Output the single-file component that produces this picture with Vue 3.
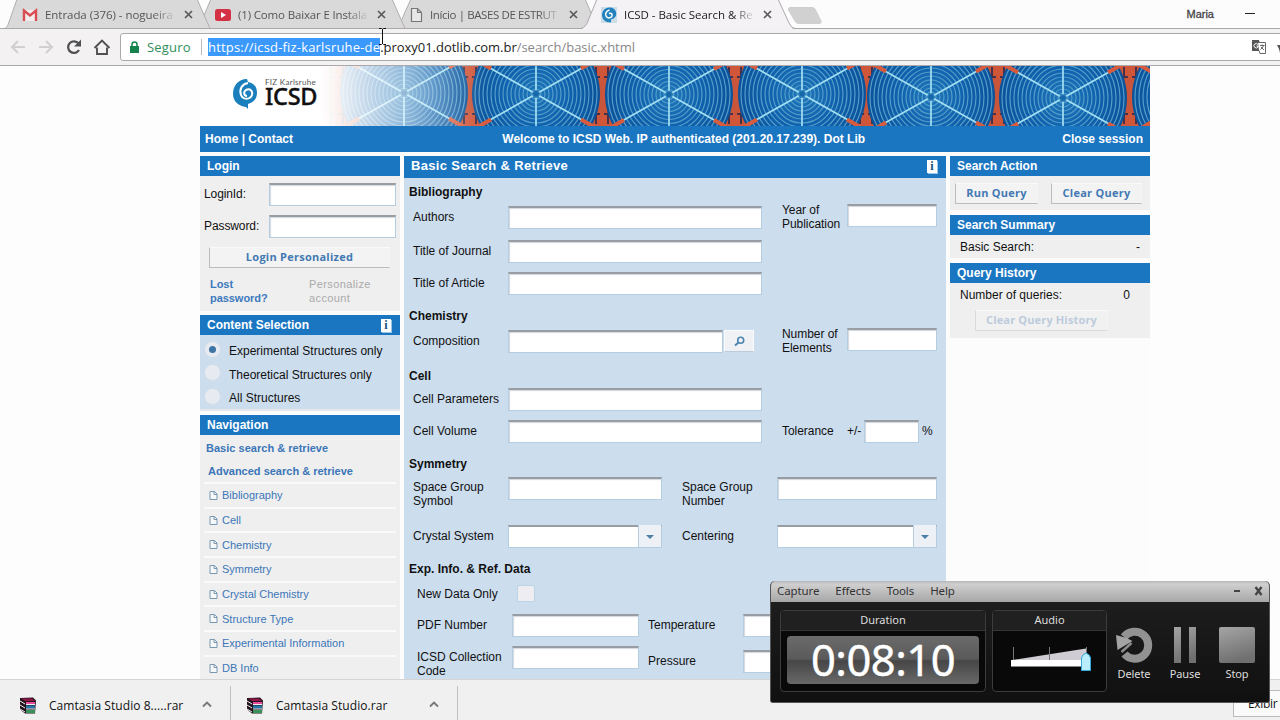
<script setup>
const tabs = [
  { icon: 'gmail', title: 'Entrada (376) - nogueira', cls: 't1' },
  { icon: 'youtube', title: '(1) Como Baixar E Instala', cls: 't2' },
  { icon: 'page', title: 'Início | BASES DE ESTRUT', cls: 't3' },
  { icon: 'icsd', title: 'ICSD - Basic Search & Re', cls: 't4' },
]
const fans = [
  { x: 204, y: 27 }, { x: 336, y: 28 }, { x: 469, y: 28.5 },
  { x: 602, y: 28 }, { x: 731, y: 31 }, { x: 863, y: 32 }, { x: 996, y: 31 },
]
const rings = [5, 9, 13, 17, 21, 25, 29, 33, 37, 41, 45, 49, 53, 57, 61]
const frames = [137, 270, 402, 535, 666, 798, 930]
const nav = ['Bibliography', 'Cell', 'Chemistry', 'Symmetry', 'Crystal Chemistry', 'Structure Type', 'Experimental Information', 'DB Info']
const structures = ['Experimental Structures only', 'Theoretical Structures only', 'All Structures']
const downloads = ['Camtasia Studio 8.....rar', 'Camtasia Studio.rar']
</script>

<template>
  <div class="window">
    <header class="tabstrip">
      <svg class="tabshapes" width="1280" height="29" viewBox="0 0 1280 29">
        <rect width="1280" height="29" fill="#fdfcfd" />
        <g fill="#dad9da" stroke="#b0aeb0">
          <path d="M398 28.5 L405 12 L411 -1 H585 L598 28.5Z" />
          <path d="M200 28.5 L205 13 L211 -1 H392 L405 28.5Z" />
          <path d="M5 28.5 Q8 27 9 22 L17 -1 H197 L210 28.5Z" />
        </g>
        <path d="M0 28.5H1280" stroke="#a9a8aa" />
        <path d="M581 28.5 Q586 27 588 21 L597 -1 H778 L789 23 Q791 28 795 28.5" fill="#f4f2f4" stroke="#a9a8aa" />
        <path d="M583 28.5H792" stroke="#f4f2f4" />
        <path d="M790 7.500H812Q814 7.500 815 9L821 21Q822 23.500 819 23.500H799Q796 23.500 795 21L788.500 10Q788 7.500 790 7.500Z" fill="#d2d1d2" stroke="#d0cfd0" />
      </svg>
      <div v-for="t in tabs" :key="t.cls" class="tab" :class="t.cls">
        <svg v-if="t.icon === 'gmail'" class="fav" width="16" height="16" viewBox="0 0 16 16">
          <path d="M1 3h14v11H1z" fill="#f3ecec" />
          <path d="M2 14V3.500L8 8.500L14 3.500V14" fill="none" stroke="#d94c50" stroke-width="2.400" />
        </svg>
        <svg v-else-if="t.icon === 'youtube'" class="fav" width="16" height="16" viewBox="0 0 16 16">
          <rect y="2" width="16" height="12" rx="2.500" fill="#d43145" /><path d="M6 5v6l5-3z" fill="#fff" />
        </svg>
        <svg v-else-if="t.icon === 'page'" class="fav" width="16" height="16" viewBox="0 0 16 16">
          <path d="M3.500 1.500h6l4 4v9h-10z M9.500 1.500v4h4" fill="#e8e8e8" stroke="#777" stroke-width="1.200" />
        </svg>
        <svg v-else class="fav" width="16" height="16" viewBox="0 0 16 16">
          <rect width="16" height="16" fill="#cbdde9" />
          <path d="M9 .5C4 0 1 4 1 8s3 7.500 9 7.500v-3c4-1 6-4 5-7.500C14 2 12 .5 9 .5z" fill="#2382bd" />
          <path d="M8.500 3C5 4 4 7 5 9c1 2.500 5 2.500 6 0 .5-2-1-3.500-3-2.500" fill="none" stroke="#fff" stroke-width="1.500" />
        </svg>
        <span class="title">{{ t.title }}</span>
        <svg class="close" width="9" height="9" viewBox="0 0 9 9"><path d="M1 1l7 7M8 1l-7 7" stroke="#5a5a5c" stroke-width="1.700" /></svg>
      </div>
      <span class="user">Maria</span>
      <i class="minimize"></i>
    </header>

    <div class="toolbar">
      <svg class="navicons" width="120" height="36" viewBox="0 0 120 36">
        <g fill="none" stroke="#d0cfd1" stroke-width="2">
          <path d="M25 18H12M18 12l-6 6 6 6" /><path d="M39 18h13M46 12l6 6-6 6" />
        </g>
        <g fill="none" stroke="#505052" stroke-width="2.200">
          <path d="M78.500 14.500A5.800 5.800 0 1 0 79 21" />
          <path d="M97 18.500v6.500h10v-6.500" stroke-width="1.900" /><path d="M94.500 19L102 11.500l7.500 7.500" stroke-width="1.900" />
        </g>
        <path d="M81 10.500v7h-7z" fill="#505052" />
      </svg>
      <div class="omnibox">
        <svg class="lock" width="9" height="12" viewBox="0 0 9 12"><rect y="5" width="9" height="7" fill="#15834b" /><path d="M2 6V3.500Q2 1 4.500 1T7 3.500V6" fill="none" stroke="#15834b" stroke-width="1.500" /></svg>
        <span class="secure">Seguro</span>
        <i class="sep"></i>
        <span class="url"><mark>https://icsd-fiz-karlsruhe-de</mark><b>.proxy01.dotlib.com.br</b><span>/search/basic.xhtml</span></span>
        <svg class="translate" width="30" height="16" viewBox="0 0 30 16">
          <path d="M1 1h7l3 11H1z" fill="#555" /><path d="M7 3.500h7.500v11H9l-1-3" fill="#fff" stroke="#666" />
          <path d="M7 5.500A2.200 2.200 0 1 0 7 8V7H5.500" fill="none" stroke="#fff" /><path d="M9 6.500h4.500M11.300 5.500v1M12.500 6.500Q12 9 9.500 10.500M10 8l3 3" fill="none" stroke="#666" />
          <path d="M26 6h5v5l-2 3-1-4z" fill="#555" />
        </svg>
      </div>
    </div>

    <main class="page">
      <div class="site">
        <div class="banner">
          <svg width="950" height="60" viewBox="0 0 950 60">
            <defs>
              <linearGradient id="fade"><stop offset="0" stop-color="#fff" /><stop offset=".08" stop-color="#fff" stop-opacity=".95" /><stop offset=".5" stop-color="#fff" stop-opacity=".55" /><stop offset="1" stop-color="#fff" stop-opacity="0" /></linearGradient>
              <radialGradient id="blade"><stop offset="0" stop-color="#1f78b9" /><stop offset=".5" stop-color="#0f62ae" /><stop offset="1" stop-color="#0b5299" /></radialGradient>
            </defs>
            <rect x="110" width="840" height="60" fill="#a5483e" />
            <g v-for="f in frames" :key="f">
              <path :d="`M${f - 5} 0h10v60h-10z`" fill="#c9553a" />
              <path :d="`M${f - 26} 0h52L${f + 7} 12H${f - 7}zM${f - 26} 60h52L${f + 7} 48H${f - 7}z`" fill="#d0563a" />
              <path :d="`M${f - 6} 1v10h4M${f + 6} 1v10h-4M${f - 6} 58v-10h4M${f + 6} 58v-10h-4`" fill="none" stroke="#46304a" stroke-width="2" />
            </g>
            <g v-for="f in fans" :key="f.x">
              <circle :cx="f.x" :cy="f.y" r="64" fill="url(#blade)" />
              <circle v-for="r in rings" :key="r" :cx="f.x" :cy="f.y" :r="r" fill="none" stroke="#559cca" stroke-width="1.200" />
              <path :d="`M${f.x} -2V64M${f.x - 55} ${f.y - 31}L${f.x + 55} ${f.y + 31}M${f.x - 55} ${f.y + 31}L${f.x + 55} ${f.y - 31}`" stroke="#a3e0f4" stroke-width="1.700" />
              <path :d="`M${f.x - 60} ${f.y - 34}l15 8.500M${f.x + 60} ${f.y + 34}l-15 -8.500M${f.x - 60} ${f.y + 34}l15 -8.500M${f.x + 60} ${f.y - 34}l-15 8.500`" stroke="#d95b3d" stroke-width="4" />
              <circle :cx="f.x" :cy="f.y" r="3.400" fill="#1768a8" stroke="#3b8fc5" />
            </g>
            <rect width="121" height="60" fill="#fff" /><rect x="120" width="165" height="60" fill="url(#fade)" />
            <path d="M47 13C38 13 33 20 33 28c0 7 5 12 13 13l2 2v-5c5-1 9-5 9-11 0-6-3-10-9-11z" fill="#1b7fbd" />
            <path d="M48 17C42 18 39 23 41 29c2 5 9 5 11 0 1-4-2-7-6-5-3 2-2 6 1 6" fill="none" stroke="#fff" stroke-width="2" />
          </svg>
          <div class="brand"><small>FIZ Karlsruhe</small><strong>ICSD</strong></div>
        </div>
        <div class="menubar"><span>Home | Contact</span><span class="welcome">Welcome to ICSD Web. IP authenticated (201.20.17.239). Dot Lib</span><span>Close session</span></div>

        <div class="columns">
          <aside class="left">
            <section class="panel login">
              <h3>Login</h3>
              <label class="cred"><span>LoginId:</span><i class="field"></i></label>
              <label class="cred"><span>Password:</span><i class="field"></i></label>
              <button class="btn">Login Personalized</button>
              <div class="links"><b>Lost<br />password?</b><span>Personalize<br />account</span></div>
            </section>
            <section class="panel content">
              <h3>Content Selection <em class="info">i</em></h3>
              <div v-for="(s, i) in structures" :key="s" class="radio"><i :class="{ on: i === 0 }"></i><span>{{ s }}</span></div>
            </section>
            <section class="panel navp">
              <h3>Navigation</h3>
              <b class="basic">Basic search &amp; retrieve</b>
              <b class="adv">Advanced search &amp; retrieve</b>
              <a v-for="n in nav" :key="n"><svg width="9" height="9" viewBox="0 0 9 9"><path d="M1 .5h4.500l2.500 2.500v5.500h-7zM5 .5v3h3" fill="#f6f8fa" stroke="#7897b0" /></svg>{{ n }}</a>
            </section>
          </aside>

          <section class="form">
            <h2>Basic Search &amp; Retrieve <em class="info">i</em></h2>
            <h4 class="h1st">Bibliography</h4>
            <div class="row r34"><label>Authors</label><i class="field w254"></i><label class="lab65 up">Year of Publication</label><i class="field w90 up2"></i></div>
            <div class="row"><label>Title of Journal</label><i class="field w254"></i></div>
            <div class="row"><label>Title of Article</label><i class="field w254"></i></div>
            <h4 class="h26">Chemistry</h4>
            <div class="row r34"><label>Composition</label><i class="field w215"></i><span class="lookup"><svg width="11" height="11" viewBox="0 0 11 11"><circle cx="6.700" cy="4.300" r="3" fill="none" stroke="#4d84b0" stroke-width="1.600" /><path d="M4.500 6.500L1 9.500" stroke="#4d84b0" stroke-width="2" /></svg></span><label class="lab65 up gap8">Number of Elements</label><i class="field w90 up2"></i></div>
            <h4>Cell</h4>
            <div class="row"><label>Cell Parameters</label><i class="field w254"></i></div>
            <div class="row"><label>Cell Volume</label><i class="field w254"></i><label class="lab65">Tolerance</label><label class="pm">+/-</label><i class="field w55"></i><label class="pc">%</label></div>
            <h4 class="h25">Symmetry</h4>
            <div class="row r48"><label>Space Group Symbol</label><i class="field w154"></i><label class="second">Space Group Number</label><i class="field w160"></i></div>
            <div class="row"><label>Crystal System</label><span class="select w154"></span><label class="second">Centering</label><span class="select w160"></span></div>
            <h4 class="h25">Exp. Info. &amp; Ref. Data</h4>
            <div class="row indent newdata"><label>New Data Only</label><i class="check"></i></div>
            <div class="row indent"><label>PDF Number</label><i class="field w127"></i><label class="third">Temperature</label><i class="field w90"></i></div>
            <div class="row indent"><label>ICSD Collection Code</label><i class="field w127"></i><label class="third low">Pressure</label><i class="field w90 low"></i></div>
          </section>

          <aside class="right">
            <section class="panel action"><h3>Search Action</h3><div><button class="btn">Run Query</button><button class="btn">Clear Query</button></div></section>
            <section class="panel summary"><h3>Search Summary</h3><p><span>Basic Search:</span><span>-</span></p></section>
            <section class="panel history"><h3>Query History</h3><p><span>Number of queries:</span><span>0</span></p><button class="btn off">Clear Query History</button></section>
          </aside>
        </div>
      </div>
    </main>

    <footer class="shelf">
      <div v-for="d in downloads" :key="d" class="download">
        <svg width="18" height="18" viewBox="0 0 18 18">
          <path d="M1 1l13-.500 3 3-1 13H6l-5-4z" fill="#24121d" />
          <path d="M2 1.500h11l3 2.500H6z" fill="#8b1747" /><path d="M7 5h9v2H7z" fill="#ea489b" />
          <path d="M7 8.500h9v3H7z" fill="#2277a8" /><path d="M7 13h9v3H7z" fill="#39925a" />
          <path d="M1 4l5 3M1 8l5 3M1 12l5 3M7 7.500h9M7 12h9" stroke="#eee" />
        </svg>
        <span>{{ d }}</span>
        <svg class="chev" width="10" height="7" viewBox="0 0 10 7"><path d="M1 5.500l4-4 4 4" fill="none" stroke="#777" stroke-width="1.800" /></svg>
      </div>
      <span class="showall">Exibir</span>
    </footer>

    <svg class="cursor" width="9" height="17" viewBox="0 0 9 17"><path d="M1 .5h2.500l1 1 1-1H8M4.500 1v15M1 16.500h2.500l1-1 1 1H8" fill="none" stroke="#111" /></svg>

    <div class="recorder">
      <div class="rmenu"><span>Capture</span><span>Effects</span><span>Tools</span><span>Help</span><i></i><svg width="9" height="10" viewBox="0 0 9 10"><path d="M1.500 1l6 8M7.500 1l-6 8" stroke="#444" stroke-width="2.300" /></svg></div>
      <div class="rbody">
        <div class="box duration"><h5>Duration</h5><div class="time">0:08:10</div></div>
        <div class="box audio"><h5>Audio</h5>
          <svg width="112" height="62" viewBox="0 0 112 62">
            <path d="M19 29L93 17.500V30H19z" fill="#d0ccd3" /><path d="M18 29h76v6.500H18z" fill="#fff" />
            <path d="M20.500 16v13M56.500 16v13M93.500 16v6" stroke="#777" />
            <path d="M88.500 39.500V27Q89 23.500 93 22Q97 23.500 97.500 27v12.500z" fill="#b9edfb" stroke="#35a9dc" />
          </svg>
        </div>
        <div class="action-r a1"><svg width="38" height="38" viewBox="0 0 38 38">
          <path d="M9 11A13.500 13.500 0 1 1 9.500 28" fill="none" stroke="#929292" stroke-width="8" />
          <path d="M1 9l1.500 15 15-9-6-3z" fill="#a4a4a4" /><path d="M6.500 26l10-9" stroke="#8c8c8c" stroke-width="2.500" />
        </svg><span>Delete</span></div>
        <div class="action-r a2"><svg width="38" height="38" viewBox="0 0 38 38"><path d="M8 1h7v36H8zM23 1h7v36h-7z" fill="url(#grey)" /></svg><span>Pause</span></div>
        <div class="action-r a3"><svg width="38" height="38" viewBox="0 0 38 38"><defs><linearGradient id="grey" x2=".3" y2="1"><stop stop-color="#a5a5a5" /><stop offset="1" stop-color="#707070" /></linearGradient></defs><rect x="1" y="1" width="36" height="36" rx="2" fill="url(#grey)" /></svg><span>Stop</span></div>
      </div>
    </div>
  </div>
</template>

<style>
body { margin: 0; background: #fff; }
</style>

<style scoped>
* { box-sizing: border-box; }
.window { position: relative; width: 1280px; height: 720px; overflow: hidden; display: flex; flex-direction: column; font: 12px/14px "Liberation Sans", Arial, sans-serif; color: #111; background: #fdfcfd; }
i, em { font-style: normal; }
.tabstrip { position: relative; height: 29px; flex: none; display: flex; font-family: "Open Sans", "Noto Sans", sans-serif; }
.tabshapes { position: absolute; left: 0; top: 0; }
.tab { position: relative; height: 29px; width: 193px; display: flex; align-items: center; padding-left: 22px; flex: none; }
.t3 { width: 192px; }
.t4 { width: 208px; padding-left: 23px; }
.t4 .title { color: #222; }
.t3 .title { letter-spacing: -.4px; margin-left: -1px; width: 133px; }
.t2 .title { letter-spacing: -.15px; }
.fav { flex: none; margin-right: 7px; }
.title { font-size: 11.500px; letter-spacing: -.05px; color: #555; width: 132px; white-space: nowrap; overflow: hidden; line-height: 18px; mask-image: linear-gradient(90deg, #000 82%, transparent 100%); }
.close { margin-left: 7px; flex: none; }
.user { position: relative; margin-left: auto; margin-top: 6px; font: 11px/16px "Liberation Sans", Arial, sans-serif; color: #444; -webkit-text-stroke: .3px #444; }
.minimize { position: relative; width: 10px; height: 1px; background: #222; margin: 13px 25px 0 31px; }
.toolbar { height: 37px; flex: none; display: flex; align-items: center; background: #f3f1f2; border-bottom: 1px solid #aaa8aa; }
.navicons { flex: none; }
.omnibox { width: 1200px; flex: none; height: 28px; border: 1px solid #aaa9ab; border-radius: 3px; background: #fff; display: flex; align-items: center; font: 13px/18px "Open Sans", "Noto Sans", sans-serif; }
.lock { margin-left: 9px; flex: none; }
.secure { color: #2f8f5b; margin-left: 8px; width: 44px; white-space: nowrap; letter-spacing: .2px; }
.sep { width: 1px; height: 16px; background: #bbb; margin: 0 6px 0 10px; }
.url { white-space: nowrap; width: 1040px; color: #888; display: block; letter-spacing: -.03px; }
.url mark { background: #3b99fc; color: #fff; letter-spacing: .18px; }
.url b { font-weight: 400; color: #222; }
.translate { margin-left: 3px; flex: none; }

.page { height: 613px; flex: none; overflow: hidden; background: #fdfdfd; }
.site { width: 950px; margin-left: 200px; background: #fdfcfd; }
.banner { position: relative; height: 60px; }
.banner svg { display: block; }
.brand { position: absolute; left: 65px; top: 11px; display: flex; flex-direction: column; }
.brand small { font: 8px/10px "Lato", sans-serif; letter-spacing: .3px; color: #555; white-space: nowrap; }
.brand strong { font: 500 23.500px/18px "Noto Sans", sans-serif; letter-spacing: -.3px; color: #101010; -webkit-text-stroke: .4px #111; height: 18px; }
.menubar { height: 26px; background: #1b76c2; color: #fff; font-weight: 700; line-height: 26px; display: flex; justify-content: space-between; padding: 0 7px 0 5px; white-space: nowrap; }
.welcome { padding-left: 12px; }
.columns { display: flex; gap: 4px; padding-top: 4px; }
.left { width: 200px; }
.panel { background: #efefef; }
h3, h2, h4, h5, p { margin: 0; }
h3 { background: #1b76c2; color: #fff; font-size: 12px; line-height: 20px; height: 20px; padding: 0 8px 0 7px; display: flex; justify-content: space-between; align-items: center; }
.info { width: 10px; height: 13px; background: #fff; color: #15517f; font: 700 12px/13px "Liberation Serif", serif; text-align: center; box-shadow: 1px 1px 0 #9cc4e6; margin-right: 1px; }
.field { display: block; flex: none; height: 23px; background: #fff; border: 1px solid #b4cde0; border-top: 2px solid #979da3; box-shadow: inset 1px 1px 1px #d3d8df; }
.btn { font: 700 11px/14px "Open Sans", "Noto Sans", sans-serif; letter-spacing: .25px; color: #4379b3; background: #f3f3f3; border: 1px solid #fafafa; border-left-color: #bcbcbc; border-bottom-color: #bcbcbc; border-right-color: #f3f3f3; padding: 0 0 2px; height: 21px; white-space: nowrap; }
.login { height: 155px; padding-bottom: 1px; margin-bottom: 4px; }
.cred { display: flex; height: 32px; padding: 7px 0 0 4px; letter-spacing: -.1px; }
.cred span { width: 65px; line-height: 22px; }
.cred .field { width: 127px; height: 23px; }
.login .btn { width: 181px; margin: 7px 0 0 9px; display: block; }
.links { display: flex; font-size: 11px; line-height: 14px; padding: 9px 0 0 10px; color: #3d79bd; }
.links b { width: 99px; letter-spacing: -.05px; }
.links span { color: #aaa; letter-spacing: .4px; }
.content { height: 96px; background: #ccddee; margin-bottom: 4px; border-bottom: 2px solid #e6e8ec; }
.content h3 { margin-bottom: 2px; }
.radio { height: 23.500px; display: flex; align-items: center; padding: 4px 0 0 4px; }
.radio i { width: 17px; height: 17px; border-radius: 50%; border: 1px solid #d1dde8; background: #e7ebf1; margin-right: 8px; margin-top: -3px; display: flex; align-items: center; justify-content: center; }
.radio i.on::after { content: ""; width: 7px; height: 7px; border-radius: 50%; background: #3e75a4; }
.radio span { padding-top: 1px; }
.navp { display: flex; flex-direction: column; height: 300px; color: #3b76b8; font-size: 11px; }
.basic { padding: 6px 0 0 6px; height: 23px; letter-spacing: .02px; }
.adv { padding: 6px 0 0 8px; height: 24px; }
.navp a { height: 24.700px; border-top: 2px solid #fafafa; margin: 0 4px; padding-left: 5px; display: flex; align-items: center; flex: none; background: #efefef; }
.navp a svg { margin-right: 4px; }

.form { width: 542px; background: #ccddee; height: 600px; }
h2 { height: 22px; line-height: 20px; font-size: 13px; letter-spacing: .33px; background: #1b76c2; color: #fff; display: flex; justify-content: space-between; align-items: center; padding: 0 8px 0 7px; }
h2 { align-items: flex-start; }
h2 .info { margin-top: 4px; }
h4 { font-size: 12px; line-height: 24px; height: 24px; padding-left: 5px; }
.h1st { height: 28px; line-height: 28px; }
.h26 { height: 26px; }
.h25 { height: 25px; }
.row { display: flex; align-items: flex-start; height: 32px; padding-left: 9px; }
.row label { width: 95px; padding-top: 4px; flex: none; }
.r34 { height: 34px; }
.r48 { height: 48px; }
.row.r48 label { padding-top: 3px; }
.indent { padding-left: 13px; }
.row .lab65 { width: 65px; margin-left: 20px; letter-spacing: -.05px; }
.row .up { margin-top: -7px; }
.row .up2 { margin-top: -2px; }
.row .gap8 { margin-left: 28px; }
.row .pm { width: 17px; }
.row .pc { width: 16px; margin-left: 3px; }
.row .second { margin-left: 20px; }
.row .third { margin-left: 9px; }
.row .third.low { padding-top: 8px; }
.row .field.low { margin-top: 4px; }
.w254 { width: 254px; }
.w215 { width: 215px; }
.w90 { width: 90px; }
.w55 { width: 55px; }
.w154 { width: 154px; }
.w160 { width: 160px; }
.w127 { width: 127px; }
.lookup { width: 30px; height: 22px; margin-left: 1px; background: #f0f1f4; border: 1px solid #fafafa; border-bottom-color: #bccbd9; display: flex; align-items: center; justify-content: center; }
.select { flex: none; display: flex; height: 23px; background: #fff; border: 1px solid #b4cde0; border-top: 2px solid #979da3; justify-content: flex-end; }
.select::before { content: ""; width: 22px; flex: none; background: #edf0f4; border-left: 1px solid #b4cde0; margin-top: -2px; }
.select::after { content: ""; width: 0; height: 0; border: 4px solid transparent; border-top-color: #4d80a8; border-bottom: 0; margin: 8px 7px 0 -15px; }
.newdata label { padding-top: 5px; }
.check { width: 18px; height: 17px; background: #eeedf2; border: 1px solid #bcd3e8; border-radius: 2px; margin: 3px 0 0 5px; }

.right { width: 200px; }
.right .panel { margin-bottom: 5px; }
.action { height: 54px; }
.action div { display: flex; gap: 13px; padding: 7px 0 0 5px; }
.action .btn { width: 83px; }
.action .btn + .btn { width: 91px; }
.summary { height: 43px; }
.right p { display: flex; justify-content: space-between; padding: 5px 10px 0; }
.history { height: 75px; }
.history p { padding-right: 20px; }
.history .btn { display: block; width: 133px; margin: 8px 0 0 25px; letter-spacing: .15px; }
.btn.off { color: #bccbdd; border-left-color: #dadada; border-bottom-color: #dadada; background: #f1f1f1; }

.shelf { height: 41px; flex: none; background: #f0f0f0; border-top: 1px solid #d5d4d5; display: flex; align-items: flex-start; position: relative; font: 12px/16px "Open Sans", "Noto Sans", sans-serif; }
.download { height: 34px; margin-top: 6px; width: 231px; border-right: 1px solid #c2c2c2; display: flex; align-items: center; padding: 6px 0 0 19px; }
.download + .download { width: 227px; padding-left: 15px; }
.download span { margin-left: 12px; letter-spacing: .06px; white-space: nowrap; }
.download svg { flex: none; }
.download .chev { margin-left: auto; margin-right: 18px; margin-top: -3px; }
.showall { margin: 10px 0 0 auto; width: 47px; height: 27px; background: #fafafa; border: 1px solid #bbb; border-right: 0; line-height: 25px; padding-left: 14px; white-space: nowrap; letter-spacing: -.3px; }
.cursor { position: absolute; left: 378px; top: 28px; }

.recorder { position: absolute; left: 770px; top: 581px; width: 500px; height: 122px; background: #151515; border: 1px solid #555; border-top: 0; border-radius: 5px 5px 3px 3px; overflow: hidden; font: 11.500px/16px "Noto Sans", "Open Sans", sans-serif; color: #ddd; }
.rmenu { height: 21px; display: flex; align-items: center; background: linear-gradient(#b7b5b8, #d0cfd0 15%, #a8a7a8); color: #333; padding: 0 0 2px 7px; margin: 0 -1px; }
.rmenu span { margin-right: 16px; letter-spacing: -.1px; }
.rmenu i { width: 6px; height: 2px; background: #444; margin-left: auto; margin-right: 14px; }
.rmenu svg { margin-right: 7px; }
.rbody { display: flex; padding: 8px 0 0 9px; background: linear-gradient(#1d1d1d, #101010); height: 101px; }
.box { border: 1px solid #3c3c3c; border-radius: 4px; height: 82px; background: #090909; }
h5 { font-weight: 400; font-size: 11px; line-height: 18px; height: 20px; text-align: center; background: #202020; border-bottom: 1px solid #343434; border-radius: 4px 4px 0 0; }
.duration { width: 206px; }
.audio { width: 115px; margin-left: 6px; }
.audio svg { display: block; }
.time { margin: 5px 6px 0; height: 48px; border-radius: 4px; background: linear-gradient(#6b6b6b, #5a5a5a 48%, #464646 52%, #696969); color: #fff; font-size: 43.500px; line-height: 47px; text-align: center; letter-spacing: -.5px; -webkit-text-stroke: .4px #fff; }
.action-r { display: flex; flex-direction: column; align-items: center; width: 50px; padding-top: 16px; font-size: 11px; }
.action-r span { margin-top: 2px; letter-spacing: -.1px; }
.a1 { margin-left: 2px; }
.a2 { margin-left: 1px; }
.a3 { margin-left: 2px; }
</style>
